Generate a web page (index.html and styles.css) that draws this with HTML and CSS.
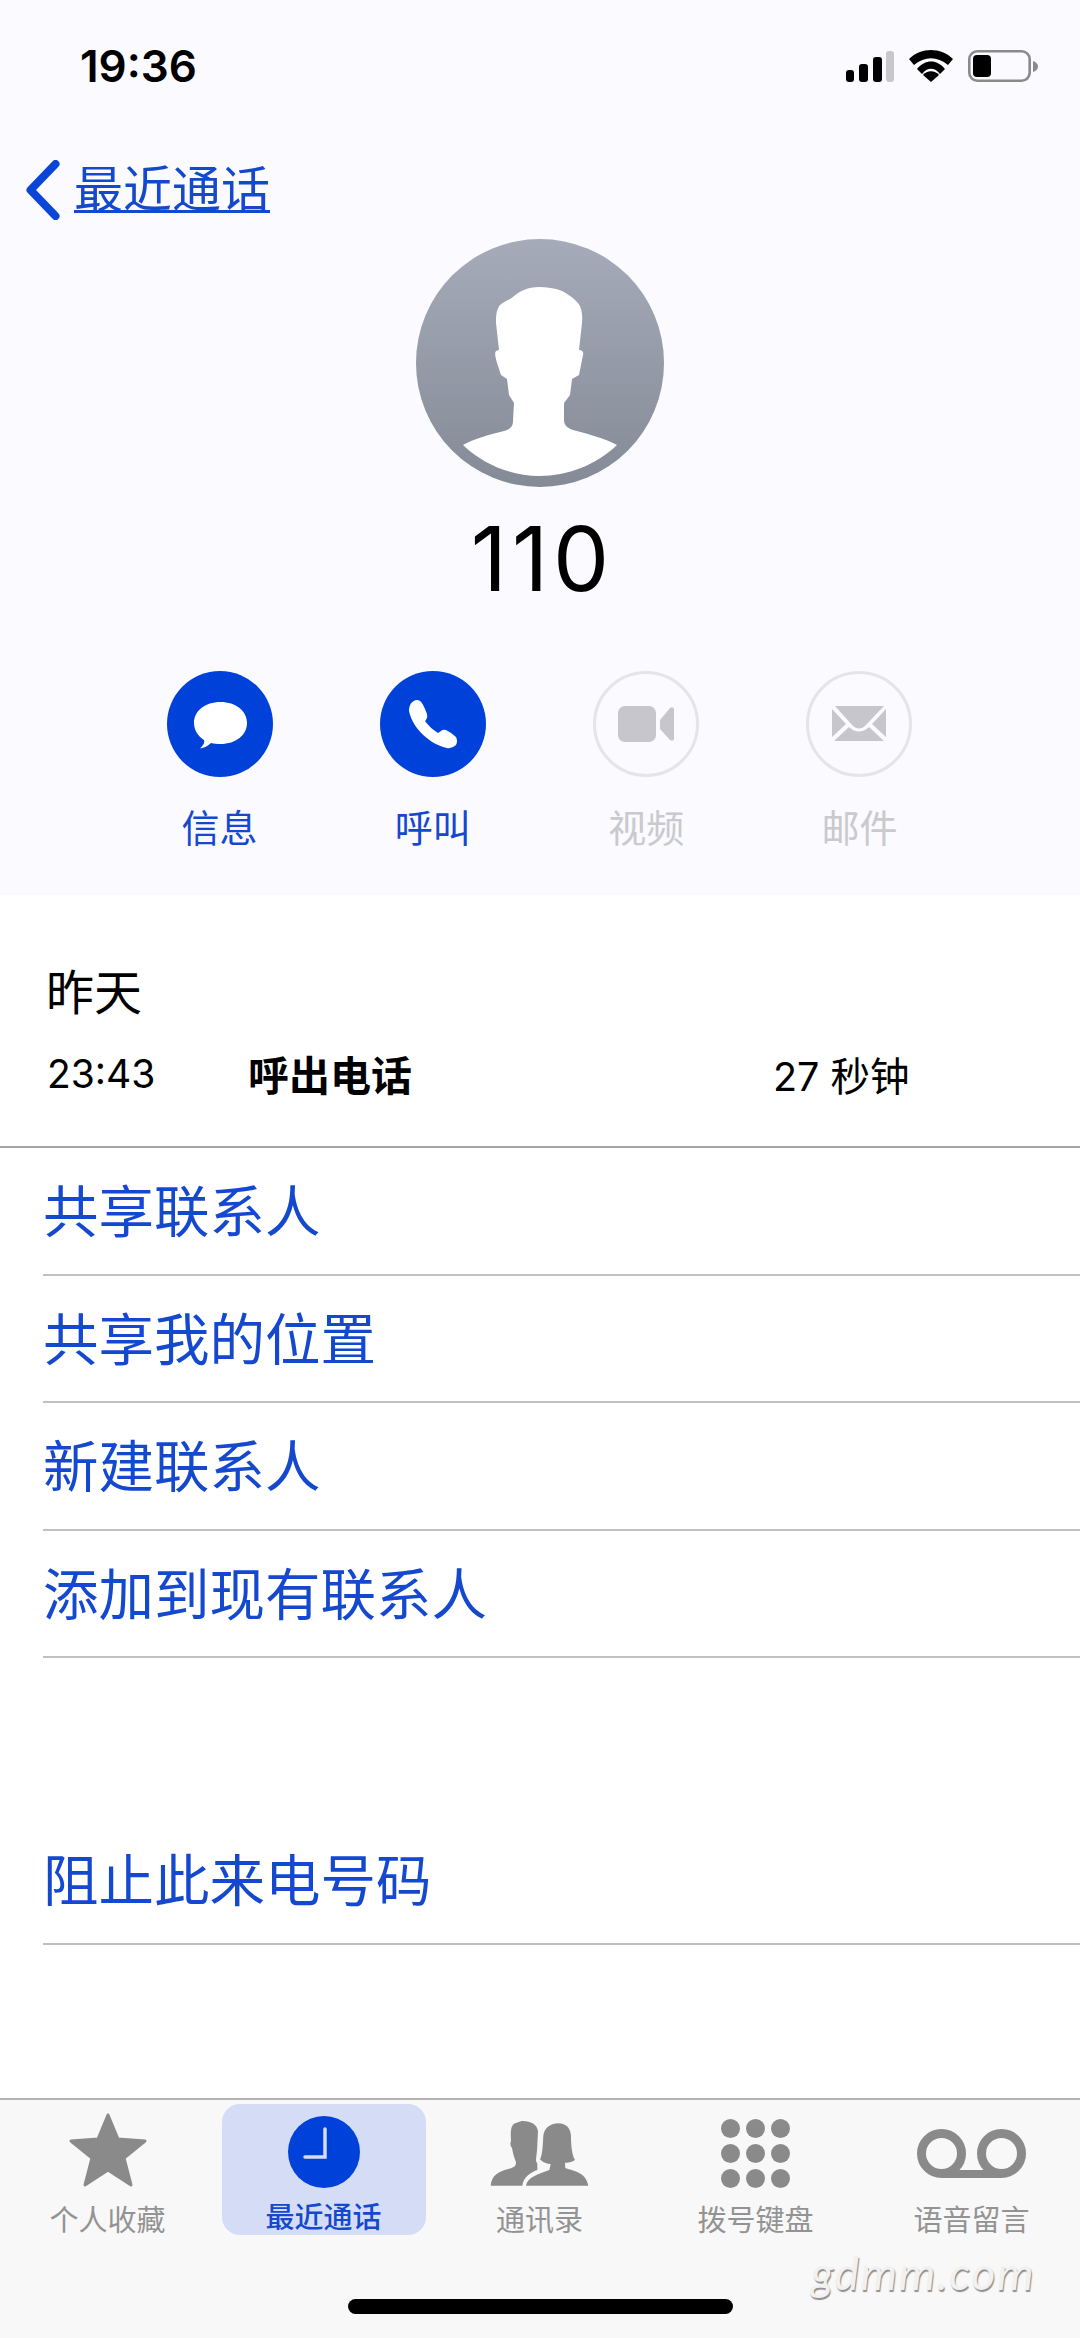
FILE: index.html
```html
<!DOCTYPE html>
<html lang="zh-CN">
<head>
    <meta charset="UTF-8">
    <meta name="viewport" content="width=device-width, initial-scale=1.0">
    <title>最近通话</title>
    <link rel="stylesheet" href="styles.css">
</head>
<body>
    <div class="phone">
        <header class="header">
            <div class="status-bar">
                <span class="status-time">19:36</span>
                <div class="status-icons">
                    <svg class="icon-signal" viewBox="0 0 48 31">
                        <rect x="0" y="19" width="8" height="12" rx="3" fill="#000"/>
                        <rect x="13" y="13" width="9" height="18" rx="3" fill="#000"/>
                        <rect x="27" y="6" width="9" height="25" rx="3" fill="#000"/>
                        <rect x="40" y="0" width="8" height="31" rx="3" fill="#c8c8cc"/>
                    </svg>
                    <svg class="icon-wifi" viewBox="0 0 44 32">
                        <path fill="#000" d="M0 9 C12 -3 32 -3 44 9 L39 15 C28 6 16 6 5 15 Z"/>
                        <path fill="#000" d="M8 19 C16 9 28 9 36 19 L31 24 C26 17 18 17 13 24 Z"/>
                        <path fill="#000" d="M22 32 L14 25 C18 20 26 20 30 25 Z"/>
                    </svg>
                    <svg class="icon-battery" viewBox="0 0 70 32">
                        <rect x="1.300" y="1.300" width="60.400" height="29.400" rx="8" fill="none" stroke="#8a8a8a" stroke-width="2.600"/>
                        <rect x="5" y="5" width="18" height="22" rx="4" fill="#000"/>
                        <path d="M65 11 Q70 13 70 16.500 Q70 20 65 22 Z" fill="#8a8a8a"/>
                    </svg>
                </div>
            </div>

            <a class="back-link">
                <svg class="icon-back" viewBox="0 0 36 60">
                    <path d="M31 4 L6 30 L31 56" fill="none" stroke="#0a45d8" stroke-width="8" stroke-linecap="round" stroke-linejoin="round"/>
                </svg>
                <span class="back-text">最近通话</span>
            </a>

            <div class="avatar">
                <svg viewBox="0 0 248 248">
                    <path fill="#fff" d="M123 48 C112 48 104 52 98 57 C94 61 88 62 84 66 C80 71 80 78 80 84 L83 111 L80 112 C78 114 80 120 81 124 L85 136 L91 140 L93 156 L98 164 L97 182 C97 188 94 190 88 192 C72 196 58 200 47 206 C68 226 96 237 123 237 C152 237 180 226 201 206 C188 199 172 195 157 191 C151 189 148 186 148 181 L148 164 L154 156 L156 140 L163 136 L167 116 C168 113 166 111 163 111 L166 84 C167 74 165 66 160 62 C155 57 150 54 146 52 C138 49 131 48 123 48 Z"/>
                </svg>
            </div>
            <h1 class="contact-number">110</h1>

            <div class="actions">
                <div class="action">
                    <div class="action-circle">
                        <svg viewBox="0 0 106 106">
                            <path fill="#fff" d="M53.500 31 C69 31 80 40 80 52 C80 64 69 73 53.500 73 C50 73 47 72.800 44 72 C41 75 37 77 33 77.500 C36 74.500 38 72 37 69 C31 65 27 59 27 52 C27 40 38 31 53.500 31 Z"/>
                        </svg>
                    </div>
                    <span class="action-label">信息</span>
                </div>
                <div class="action">
                    <div class="action-circle">
                        <svg viewBox="0 0 106 106">
                            <path fill="#fff" d="M33 30.500 Q37 28 40 30 Q43 32 47 43 Q48 46 46 49 L45 50 Q50 57 58 62 L61 60 Q63 58 66 59 Q72 62 76 66 Q78 70 76 74 Q72 78 67 77 C52 74 33 59 29 40 Q29 33 33 30.500 Z"/>
                        </svg>
                    </div>
                    <span class="action-label">呼叫</span>
                </div>
                <div class="action disabled">
                    <div class="action-circle">
                        <svg viewBox="0 0 106 106">
                            <rect x="25" y="35" width="38" height="36" rx="7" fill="#c6c6cc"/>
                            <path fill="#c6c6cc" d="M67 49 L77 37 Q80 35 81 38 L81 68 Q80 71 77 69 L67 58 Z"/>
                        </svg>
                    </div>
                    <span class="action-label">视频</span>
                </div>
                <div class="action disabled">
                    <div class="action-circle">
                        <svg viewBox="0 0 106 106">
                            <path fill="#c6c6cc" d="M29 35 L78 35 L59 55 Q53 60 47 55 Z"/>
                            <path fill="#c6c6cc" d="M26 38 L26 66 L40 53 Z M80 38 L80 66 L66 53 Z"/>
                            <path fill="#c6c6cc" d="M28 70 L43 56 Q53 65 63 56 L78 70 Z"/>
                        </svg>
                    </div>
                    <span class="action-label">邮件</span>
                </div>
            </div>
        </header>

        <main class="content">
            <section class="call-info">
                <div class="call-day">昨天</div>
                <div class="call-row">
                    <span class="call-time">23:43</span>
                    <span class="call-type">呼出电话</span>
                    <span class="call-length">27 秒钟</span>
                </div>
            </section>

            <ul class="menu">
                <li class="menu-item">共享联系人</li>
                <li class="menu-item">共享我的位置</li>
                <li class="menu-item">新建联系人</li>
                <li class="menu-item">添加到现有联系人</li>
            </ul>
            <ul class="menu menu-block">
                <li class="menu-item">阻止此来电号码</li>
            </ul>
        </main>

        <nav class="tabbar">
            <div class="tabs">
                <div class="tab">
                    <div class="tab-glyph">
                        <svg class="icon-star" viewBox="0 0 80 76">
                            <path fill="#8a8a8a" stroke="#8a8a8a" stroke-width="3" stroke-linejoin="round" d="M40 3 L50 27 L77 29 L56 46 L63 73 L40 58 L17 73 L24 46 L3 29 L30 27 Z"/>
                        </svg>
                    </div>
                    <span class="tab-label">个人收藏</span>
                </div>
                <div class="tab active">
                    <div class="tab-glyph">
                        <svg class="icon-clock" viewBox="0 0 72 72">
                            <circle cx="36" cy="36" r="36" fill="#0041d9"/>
                            <path d="M37 13 L37 41 L17 41" fill="none" stroke="#d5ddf5" stroke-width="3.500" stroke-linecap="round"/>
                        </svg>
                    </div>
                    <span class="tab-label">最近通话</span>
                </div>
                <div class="tab">
                    <div class="tab-glyph">
                        <svg class="icon-contacts" viewBox="30 25 300 205">
                            <path fill="#8a8a8a" d="M125 31 C150 30 172 40 174 62 L172 100 C172 120 168 140 168 150 L172 160 L172 178 C150 186 130 200 127 225 L32 225 C34 195 55 182 85 175 C100 171 108 168 108 155 C102 140 98 125 96 112 C90 105 90 95 93 92 C92 70 90 45 105 38 Z"/>
                            <path fill="#8a8a8a" d="M235 38 C255 38 272 50 273 75 C273 100 275 130 285 148 C275 155 265 157 255 156 L256 172 C275 180 318 182 325 225 L138 225 C142 200 175 190 208 178 L212 160 C200 160 190 156 180 146 C188 130 188 105 190 75 C192 50 215 38 235 38 Z"/>
                        </svg>
                    </div>
                    <span class="tab-label">通讯录</span>
                </div>
                <div class="tab">
                    <div class="tab-glyph">
                        <div class="keypad">
                            <i></i><i></i><i></i><i></i><i></i><i></i><i></i><i></i><i></i>
                        </div>
                    </div>
                    <span class="tab-label">拨号键盘</span>
                </div>
                <div class="tab">
                    <div class="tab-glyph">
                        <svg class="icon-voicemail" viewBox="0 0 109 50">
                            <circle cx="24.500" cy="24.500" r="20" fill="none" stroke="#8a8a8a" stroke-width="9"/>
                            <circle cx="84.500" cy="24.500" r="20" fill="none" stroke="#8a8a8a" stroke-width="9"/>
                            <rect x="24.500" y="41" width="60" height="8" fill="#8a8a8a"/>
                        </svg>
                    </div>
                    <span class="tab-label">语音留言</span>
                </div>
            </div>
            <div class="home-bar"></div>
        </nav>

        <div class="watermark">gdmm.com</div>
    </div>
</body>
</html>
```

FILE: styles.css
```css
* {
    box-sizing: border-box;
}

body {
    margin: 0;
    font-family: Inter, "Noto Sans CJK SC", sans-serif;
    color: #000;
    background: #fff;
}

.phone {
    position: relative;
    width: 1080px;
    height: 2338px;
    display: flex;
    flex-direction: column;
    overflow: hidden;
}

.header {
    height: 895px;
    background: #fafaff;
    flex-shrink: 0;
}

.status-bar {
    height: 84px;
    padding: 48px 42px 0 80px;
    display: flex;
    justify-content: space-between;
    align-items: center;
}

.status-time {
    font-size: 44px;
    font-weight: 600;
}

.status-icons {
    display: flex;
    align-items: center;
    gap: 15px;
}

.icon-signal {
    width: 48px;
    height: 31px;
}

.icon-wifi {
    width: 44px;
    height: 32px;
}

.icon-battery {
    width: 70px;
    height: 32px;
}

.back-link {
    display: flex;
    align-items: center;
    height: 60px;
    margin-top: 76px;
    padding-left: 24px;
    gap: 13px;
    color: #1448cf;
}

.icon-back {
    width: 37px;
    height: 60px;
}

.back-text {
    font-size: 49px;
    line-height: 60px;
    text-decoration: underline;
    text-decoration-thickness: 3px;
    text-underline-offset: 3px;
}

.avatar {
    width: 248px;
    height: 248px;
    margin: 19px auto 0;
    border-radius: 50%;
    background: linear-gradient(180deg, #a6abb9 0%, #858a97 100%);
    overflow: hidden;
}

.avatar svg {
    display: block;
    width: 248px;
    height: 248px;
}

.contact-number {
    margin: 22px 0 0;
    padding-left: 5px;
    font-size: 89px;
    font-weight: 400;
    letter-spacing: 5px;
    line-height: 100px;
    text-align: center;
}

.actions {
    display: grid;
    grid-template-columns: repeat(4, 213.3px);
    justify-content: center;
    margin-top: 62px;
    padding-right: 1px;
}

.action {
    display: flex;
    flex-direction: column;
    align-items: center;
    color: #1448cf;
}

.action-circle {
    width: 106px;
    height: 106px;
    border-radius: 50%;
    background: #0041d9;
}

.action-circle svg {
    display: block;
    width: 100%;
    height: 100%;
}

.action-label {
    margin-top: 28px;
    font-size: 38px;
    line-height: 46px;
}

.action.disabled {
    color: #c9c9ce;
}

.action.disabled .action-circle {
    background: none;
    border: 3px solid #e4e4e9;
}

.action.disabled .action-circle svg {
    margin: -3px;
    width: 106px;
    height: 106px;
}

.content {
    flex: 1;
    background: #fff;
}

.call-info {
    height: 253px;
    padding: 67px 47px 0 47px;
    border-bottom: 2px solid #a3a3a3;
}

.call-day {
    margin-left: -1px;
    font-size: 48px;
    line-height: 62px;
}

.call-row {
    display: flex;
    align-items: center;
    margin-top: 27px;
    height: 44px;
    font-size: 39px;
}

.call-time {
    width: 201px;
}

.call-type {
    width: 525px;
    font-size: 41px;
    font-weight: 600;
}

.call-length {
    font-size: 39.5px;
}

.menu {
    list-style: none;
    margin: 0;
    padding: 0 0 0 43px;
}

.menu-item {
    height: 127.5px;
    display: flex;
    align-items: center;
    font-size: 55.5px;
    color: #1448cf;
    border-bottom: 2px solid #c0c0c0;
    padding: 0 0 5px 0;
}

.menu-block {
    margin-top: 159px;
}

.tabbar {
    height: 240px;
    flex-shrink: 0;
    background: #f8f8f8;
    border-top: 2px solid #b3b3b3;
}

.tabs {
    display: grid;
    grid-template-columns: repeat(5, 216px);
    height: 135px;
    margin: 4px 0 0 -0.5px;
}

.tab {
    display: flex;
    flex-direction: column;
    align-items: center;
    color: #939393;
}

.tab.active {
    justify-self: center;
    width: 204px;
    height: 131px;
    background: #d4ddf5;
    border-radius: 18px;
    color: #1448cf;
    font-weight: 500;
    overflow: hidden;
}

.tab-glyph {
    height: 100px;
    display: flex;
    align-items: center;
    justify-content: center;
}

.tab-label {
    font-size: 29px;
    line-height: 34px;
}

.icon-star {
    width: 80px;
    height: 76px;
    margin-top: -8px;
}

.icon-clock {
    width: 72px;
    height: 72px;
    margin-top: -1px;
}

.icon-contacts {
    width: 100px;
    height: 68.3px;
    margin-top: -1px;
}

.icon-voicemail {
    width: 109px;
    height: 50px;
    margin-top: -1px;
}

.keypad {
    display: grid;
    grid-template-columns: repeat(3, 19px);
    grid-auto-rows: 19px;
    gap: 6px;
    margin-top: -1px;
}

.keypad i {
    background: #8a8a8a;
    border-radius: 50%;
}

.home-bar {
    width: 385px;
    height: 15px;
    margin: 60px auto 0;
    border-radius: 8px;
    background: #000;
}

.watermark {
    position: absolute;
    left: 811px;
    top: 2244px;
    font-family: Lato, sans-serif;
    font-size: 46.5px;
    font-style: italic;
    font-weight: 400;
    letter-spacing: 1.5px;
    color: #f1f1f1;
    text-shadow: 1px 2px 1px #8f8f8f;
}
```
